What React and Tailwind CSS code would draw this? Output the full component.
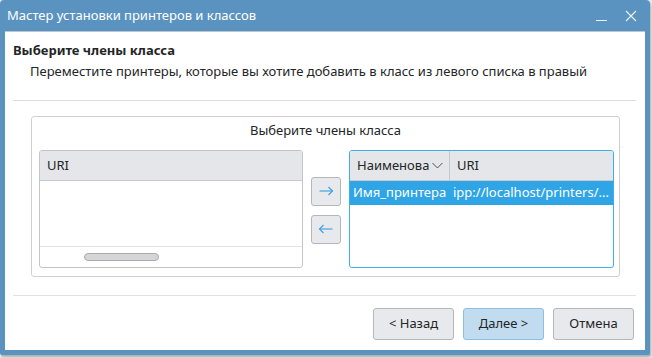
// App.jsx — printer class wizard dialog
const font = { fontFamily: '"Noto Sans", "Open Sans", sans-serif' };

const ArrowBtn = ({ dir }) => (
  <button className="w-[30px] h-[29px] rounded-[3px] border border-[#b4b6b9] bg-[#e8e9ec] flex items-center justify-center">
    <svg width="16" height="10" viewBox="0 0 16 10" fill="none" stroke="#3a9fe0" strokeWidth="1.1">
      {dir === "right" ? (
        <>
          <path d="M1.5 5h13" />
          <path d="M10.5 1l4 4-4 4" />
        </>
      ) : (
        <>
          <path d="M14.5 5h-13" />
          <path d="M5.5 1l-4 4 4 4" />
        </>
      )}
    </svg>
  </button>
);

const WizButton = ({ children, primary }) => (
  <button
    className={`w-[81px] h-[32px] rounded-[3px] border text-[13px] text-[#232627] ${
      primary ? "bg-[#c2dcef] border-[#8cbfe2]" : "bg-[#e8e9ec] border-[#b4b6b9]"
    }`}
  >
    {children}
  </button>
);

export default function App() {
  return (
    <div className="w-[652px] h-[358px] bg-[#e9e9e9] text-[#232627]" style={font}>
      <div className="w-[650px] h-[355px] bg-[#5b93c0] rounded-t-[4px] rounded-b-[2px] flex flex-col px-[5px] pb-[5px] shadow-[1px_2px_2px_rgba(0,0,0,0.25)]">
        {/* title bar */}
        <div className="h-[32px] flex items-center justify-between text-white border-b border-[#b9c6d1]">
          <div className="pl-[2px] text-[13px] leading-none">Мастер установки принтеров и классов</div>
          <div className="flex items-center gap-[18px] pr-[8px]">
            <svg width="11" height="12" viewBox="0 0 11 12" stroke="#eef3f8" strokeWidth="1">
              <path d="M0 10.5h11" />
            </svg>
            <svg width="12" height="12" viewBox="0 0 12 12" stroke="#eef3f8" strokeWidth="1.1">
              <path d="M1 1l10 10M11 1L1 11" />
            </svg>
          </div>
        </div>

        {/* body */}
        <div className="flex-1 bg-white flex flex-col pl-[8px] pr-[9px]">
          <div className="pt-[9px] text-[13px] leading-[18px] font-bold">Выберите члены класса</div>
          <div className="pl-[17px] pt-[3px] text-[13px] leading-[18px]">
            Переместите принтеры, которые вы хотите добавить в класс из левого списка в правый
          </div>
          <div className="mt-[20px] h-px bg-[#dcdcdc]" />

          {/* group box */}
          <div className="mt-[15px] ml-[18px] mr-[16px] h-[161px] rounded-[3px] border border-[#d0d1d2] flex flex-col">
            <div className="pt-[4px] text-center text-[13px] leading-[18px]">Выберите члены класса</div>
            <div className="mt-[11px] flex items-center gap-[8px] pl-[7px]">
              {/* left list */}
              <div className="w-[264px] h-[118px] rounded-[3px] border border-[#c4c5c7] flex flex-col overflow-hidden">
                <div className="h-[30px] shrink-0 bg-[#e5e6ea] border-b border-[#c8c9cc] flex items-center pl-[7px] text-[13px]">URI</div>
                <div className="flex-1" />
                <div className="h-[21px] shrink-0 border-t border-[#e2e3e5] flex items-center pl-[44px]">
                  <div className="w-[75px] h-[8px] rounded-full bg-[#d4d5d7] border border-[#a9abae]" />
                </div>
              </div>

              {/* arrows */}
              <div className="flex flex-col gap-[9px] pt-[2px]">
                <ArrowBtn dir="right" />
                <ArrowBtn dir="left" />
              </div>

              {/* right list */}
              <div className="w-[265px] h-[118px] rounded-[3px] border border-[#3daee9] flex flex-col overflow-hidden">
                <div className="h-[30px] shrink-0 bg-[#e5e6ea] border-b border-[#c8c9cc] flex text-[13px]">
                  <div className="w-[100px] border-r border-[#c8c9cc] flex items-center pl-[7px] pr-[6px]">
                    <span className="w-[76px] overflow-hidden whitespace-nowrap">Наименова</span>
                    <svg width="11" height="7" viewBox="0 0 11 7" fill="none" stroke="#4d4d4d" strokeWidth="1">
                      <path d="M0.5 1l5 5 5-5" />
                    </svg>
                  </div>
                  <div className="flex items-center pl-[7px]">URI</div>
                </div>
                <div className="h-[24px] shrink-0 bg-[#30a5e6] text-white text-[13px] flex items-center whitespace-nowrap">
                  <span className="w-[100px] pl-[3px]">Имя_принтера</span>
                  <span className="pl-[3px]">ipp://localhost/printers/...</span>
                </div>
              </div>
            </div>
          </div>

          <div className="mt-[18px] h-px bg-[#e2e2e2]" />

          <div className="mt-[12px] flex justify-end gap-[9px] pr-[2px]">
            <WizButton>&lt; Назад</WizButton>
            <WizButton primary>Далее &gt;</WizButton>
            <WizButton>Отмена</WizButton>
          </div>
        </div>
      </div>
    </div>
  );
}
